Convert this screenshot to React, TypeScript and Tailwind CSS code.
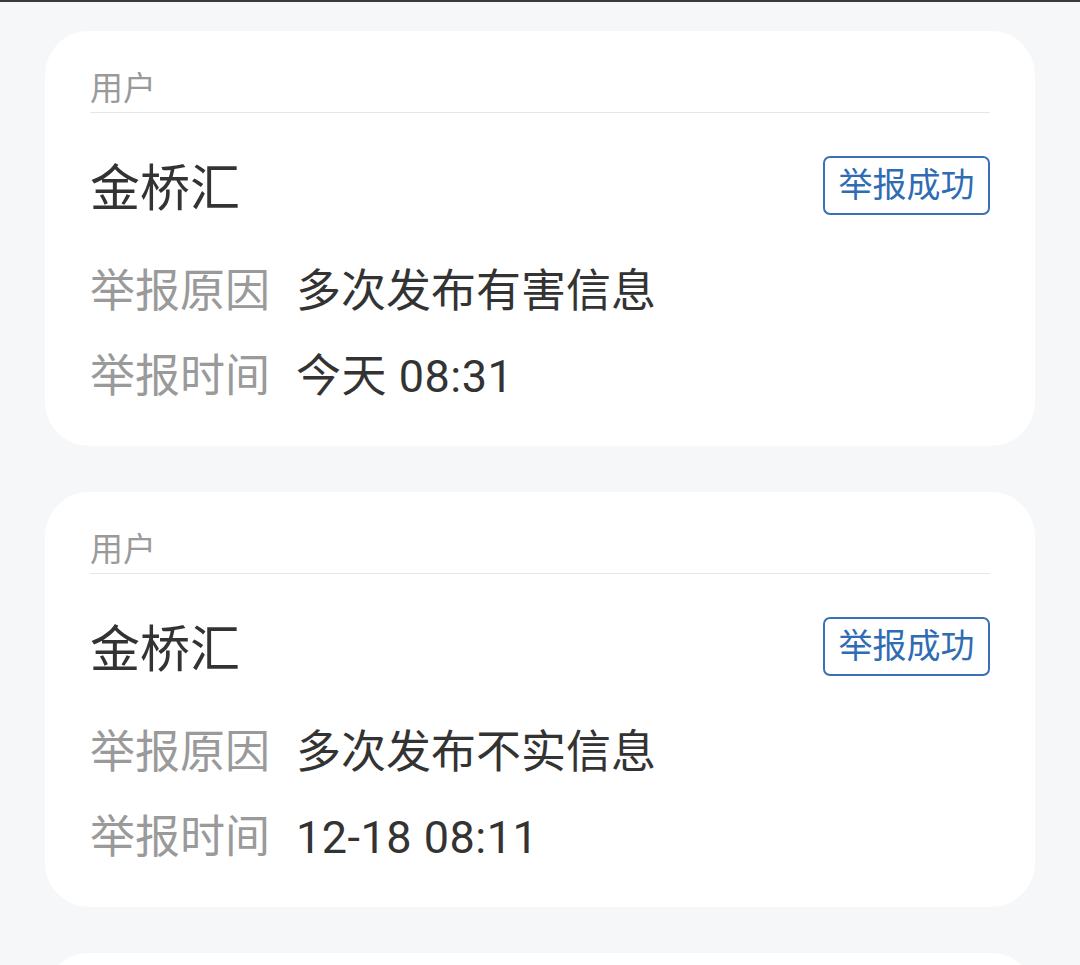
import React from "react";

type Report = {
  name: string;
  reason: string;
  time: string;
};

const reports: Report[] = [
  { name: "金桥汇", reason: "多次发布有害信息", time: "今天 08:31" },
  { name: "金桥汇", reason: "多次发布不实信息", time: "12-18 08:11" },
];

const font = { fontFamily: '"Roboto", "Noto Sans CJK SC", sans-serif' };

const ReportCard = ({ item }: { item: Report }) => (
  <div className="bg-white rounded-[44px] px-[45px] pt-[35px] pb-[39px] shrink-0">
    <div className="text-[33px] leading-[46px] text-[#9a9a9a] border-b border-[#e6e6e6]">用户</div>
    <div className="flex items-center justify-between mt-[43px] h-[59px]">
      <div className="text-[50px] leading-[60px] text-[#333333] mt-[6px]">{item.name}</div>
      <div className="h-[59px] w-[167px] flex items-center justify-center rounded-[7px] border-2 border-[#3a70b6] text-[34px] text-[#2f6cb4]">
        举报成功
      </div>
    </div>
    <div className="flex mt-[47px] text-[45px] leading-[60px]">
      <span className="w-[206px] text-[#9a9a9a]">举报原因</span>
      <span className="text-[#333333]">{item.reason}</span>
    </div>
    <div className="flex mt-[25px] text-[45px] leading-[60px]">
      <span className="w-[206px] text-[#9a9a9a]">举报时间</span>
      <span className="text-[#333333] tracking-[0.5px]">{item.time}</span>
    </div>
  </div>
);

export default function App() {
  return (
    <div className="h-[965px] overflow-hidden bg-[#f6f7f9]" style={font}>
      <div className="h-[2px] bg-[#3a3a3a]" />
      <div className="flex flex-col gap-[46px] px-[45px] pt-[29px]">
        {reports.map((r, i) => (
          <ReportCard key={i} item={r} />
        ))}
        <div className="bg-white rounded-[44px] h-[300px] shrink-0" />
      </div>
    </div>
  );
}
